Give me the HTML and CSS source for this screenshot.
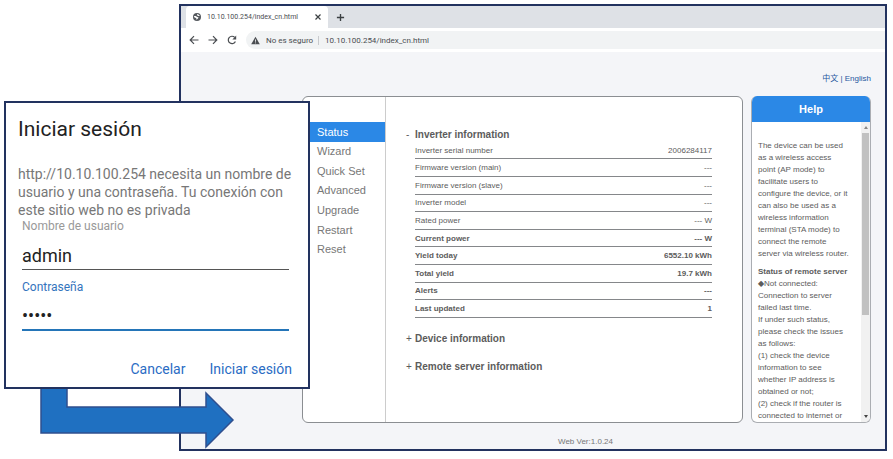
FILE: index.html
```html
<!DOCTYPE html>
<html lang="es">
<head>
  <meta charset="utf-8">
  <title>Iniciar sesión</title>
  <link rel="stylesheet" href="styles.css">
</head>
<body>
  <div class="browser">
    <div class="tabstrip">
      <div class="tab">
        <svg class="globe" viewBox="0 0 16 16">
          <circle cx="8" cy="8" r="8" fill="#55595e"/>
          <path d="M2 6 L6 6 L8 8 L11 8.5 L10 11 L7 13.5 L6.5 10.5 L2.5 8.5 Z M8 2 L12 3.5 L13.5 6 L10.5 6 L8 4.5 Z" fill="#fff"/>
        </svg>
        <span class="tab-title">10.10.100.254/index_cn.html</span>
        <button class="tab-close" aria-label="Cerrar">
          <svg viewBox="0 0 8 8"><path d="M1.5 1.5 L6.5 6.5 M6.5 1.5 L1.5 6.5" stroke="#3c4043" stroke-width="1.2"/></svg>
        </button>
      </div>
      <button class="tab-new" aria-label="Nueva pestaña">
        <svg viewBox="0 0 10 10"><path d="M5 1 V9 M1 5 H9" stroke="#3c4043" stroke-width="1.5"/></svg>
      </button>
    </div>
    <div class="toolbar">
      <button aria-label="Atrás">
        <svg viewBox="0 0 10 10"><path d="M9.5 5 H1.5 M5 1.2 L1.2 5 L5 8.8" fill="none" stroke="#4a4d51" stroke-width="1.2"/></svg>
      </button>
      <button aria-label="Adelante">
        <svg viewBox="0 0 10 10"><path d="M0.5 5 H8.5 M5 1.2 L8.8 5 L5 8.8" fill="none" stroke="#4a4d51" stroke-width="1.2"/></svg>
      </button>
      <button aria-label="Recargar">
        <svg viewBox="0 0 10 10"><path d="M8.4 6.4 A3.7 3.7 0 1 1 7.7 2.4" fill="none" stroke="#4a4d51" stroke-width="1.2"/><path d="M9.2 0.6 V4.4 H5.4 Z" fill="#4a4d51"/></svg>
      </button>
      <div class="address">
        <svg class="warning" viewBox="0 0 10 10"><path d="M5 0.8 L9.8 9.2 H0.2 Z" fill="#4a4d51"/><path d="M5 3.8 V6.4 M5 7.2 V8.2" stroke="#fff" stroke-width="0.9"/></svg>
        <span class="unsafe">No es seguro</span>
        <span class="url">10.10.100.254/index_cn.html</span>
      </div>
    </div>
    <div class="page">
      <div class="lang"><a href="#">中文</a> | <a href="#">English</a></div>
      <div class="columns">
        <div class="panel">
          <ul class="nav">
            <li class="active"><a href="#">Status</a></li>
            <li><a href="#">Wizard</a></li>
            <li><a href="#">Quick Set</a></li>
            <li><a href="#">Advanced</a></li>
            <li><a href="#">Upgrade</a></li>
            <li><a href="#">Restart</a></li>
            <li><a href="#">Reset</a></li>
          </ul>
          <div class="content">
            <h2><span class="sign">-</span>Inverter information</h2>
            <table>
              <tr><th>Inverter serial number</th><td>2006284117</td></tr>
              <tr><th>Firmware version (main)</th><td>---</td></tr>
              <tr><th>Firmware version (slave)</th><td>---</td></tr>
              <tr><th>Inverter model</th><td>---</td></tr>
              <tr><th>Rated power</th><td>--- W</td></tr>
              <tr class="strong"><th>Current power</th><td>--- W</td></tr>
              <tr class="strong"><th>Yield today</th><td>6552.10 kWh</td></tr>
              <tr class="strong"><th>Total yield</th><td>19.7 kWh</td></tr>
              <tr class="strong"><th>Alerts</th><td>---</td></tr>
              <tr class="strong"><th>Last updated</th><td>1</td></tr>
            </table>
            <h2><span class="sign">+</span>Device information</h2>
            <h2><span class="sign">+</span>Remote server information</h2>
          </div>
        </div>
        <div class="help">
          <h3>Help</h3>
          <div class="help-body">
            <div class="help-text">
              <p>The device can be used<br>as a wireless access<br>point (AP mode) to<br>facilitate users to<br>configure the device, or it<br>can also be used as a<br>wireless information<br>terminal (STA mode) to<br>connect the remote<br>server via wireless router.</p>
              <p><b>Status of remote server</b><br>◆Not connected:<br>Connection to server<br>failed last time.<br>If under such status,<br>please check the issues<br>as follows:<br>(1) check the device<br>information to see<br>whether IP address is<br>obtained or not;<br>(2) check if the router is<br>connected to internet or</p>
            </div>
            <div class="scrollbar">
              <span class="arrow-up"></span>
              <span class="thumb"></span>
              <span class="arrow-down"></span>
            </div>
          </div>
        </div>
      </div>
      <div class="version">Web Ver:1.0.24</div>
    </div>
  </div>

  <svg class="flow-arrow" viewBox="0 0 196 66">
    <path d="M1 1 H27 V24 H166 V10 L193 37 L166 64 V50 H1 Z" fill="#1f70c1" stroke="#2f4f8f" stroke-width="1.5"/>
  </svg>

  <form class="dialog">
    <h1>Iniciar sesión</h1>
    <p>http://10.10.100.254 necesita un nombre de usuario y una contraseña. Tu conexión con este sitio web no es privada</p>
    <div class="field">
      <label for="user">Nombre de usuario</label>
      <input type="text" id="user" value="admin">
    </div>
    <div class="field focus">
      <label for="pass">Contraseña</label>
      <input type="password" id="pass" value="admin">
    </div>
    <div class="actions">
      <button type="button">Cancelar</button>
      <button type="button">Iniciar sesión</button>
    </div>
  </form>
</body>
</html>
```

FILE: styles.css
```css
* {
  box-sizing: border-box;
}

body {
  margin: 0;
  padding: 4px 6px 7px 179px;
  background-color: #fff;
  font-family: "Liberation Sans", Arial, sans-serif;
  color: #5c5c5c;
}

button {
  display: flex;
  padding: 0;
  border: none;
  background: none;
  cursor: pointer;
}

a {
  color: inherit;
  text-decoration: none;
}

h1, h2, h3, p, ul {
  margin: 0;
  padding: 0;
}

/* browser window */
.browser {
  border: 2px solid #22325f;
  background-color: #f4f5f8;
}

.tabstrip {
  display: flex;
  align-items: center;
  gap: 8px;
  padding-left: 5px;
  background-color: #dee1e6;
}

.tab {
  display: flex;
  align-items: center;
  width: 142px;
  height: 22px;
  padding: 0 6px 0 7px;
  background-color: #fff;
  border-radius: 4px 4px 0 0;
}

.globe {
  width: 8px;
  height: 8px;
  margin-right: 6px;
}

.tab-title, .address {
  font-family: Roboto, sans-serif;
  font-size: 8px;
  color: #4a4d51;
}

.tab-title {
  flex: 1;
  font-size: 7px;
  white-space: nowrap;
}

.tab-close svg {
  width: 8px;
  height: 8px;
}

.tab-new svg {
  width: 9px;
  height: 9px;
}

.toolbar {
  display: flex;
  align-items: center;
  gap: 9px;
  height: 24px;
  padding-left: 8px;
  background-color: #fff;
}

.toolbar button svg {
  width: 10px;
  height: 10px;
}

.address {
  display: flex;
  align-items: center;
  flex: 1;
  height: 18px;
  padding-left: 5px;
  background-color: #f1f3f4;
  border-radius: 9px 0 0 9px;
}

.warning {
  width: 9px;
  height: 9px;
  margin-right: 6px;
}

.unsafe {
  padding-right: 5px;
  margin-right: 6px;
  border-right: 1px solid #c8cacd;
}

/* inverter page */
.page {
  padding: 21px 14px 1px 121px;
}

.lang {
  font-family: "Liberation Sans", "Noto Sans CJK SC", sans-serif;
  font-size: 8px;
  line-height: 12px;
  color: #1f57a0;
  text-align: right;
}

.columns {
  display: flex;
  gap: 8px;
  margin-top: 11px;
}

.panel {
  display: flex;
  flex: 1;
  background-color: #fff;
  border: 1px solid #8b8e92;
  border-radius: 6px;
}

.nav {
  display: grid;
  grid-auto-rows: 1fr;
  width: 83px;
  height: 325px;
  padding: 25px 0 163px;
  border-right: 1px solid #ccc;
  list-style: none;
  font-size: 11px;
  color: #777;
}

.nav li {
  display: flex;
  align-items: center;
  padding-left: 14px;
}

.nav .active {
  background-color: #2b88e6;
  color: #fff;
}

.content {
  flex: 1;
  padding: 31px 30px 0 29px;
}

h2 {
  margin-bottom: 14px;
  font-size: 10px;
  line-height: 14px;
}

.sign {
  display: inline-block;
  width: 9px;
  margin-left: -9px;
  font-weight: normal;
}

table {
  width: 100%;
  height: 176px;
  margin: -14px 0 14px;
  border-collapse: collapse;
  font-size: 8px;
}

th, td {
  padding: 0;
  border-bottom: 1px solid #85878a;
  font-weight: normal;
  text-align: left;
}

td {
  text-align: right;
}

.strong th, .strong td {
  font-weight: bold;
}

.help {
  display: flex;
  flex-direction: column;
  width: 120px;
  height: 327px;
  background-color: #fff;
  border: 1px solid #aaadb2;
  border-top: none;
  border-radius: 6px;
  overflow: hidden;
}

.help h3 {
  margin: 0 -1px;
  background-color: #2b88e6;
  color: #fff;
  font-size: 11px;
  line-height: 26px;
  text-align: center;
}

.help-body {
  display: flex;
  flex: 1;
  min-height: 0;
}

.help-text {
  flex: 1;
  padding: 18px 0 0 6px;
  font-size: 8px;
  line-height: 12px;
  white-space: nowrap;
}

.help-text p {
  margin-bottom: 6px;
}

.scrollbar {
  display: flex;
  flex-direction: column;
  align-items: center;
  width: 9px;
  padding: 4px 0;
  background-color: #f1f1f1;
}

.arrow-up, .arrow-down {
  border: 2px solid transparent;
}

.arrow-up {
  border-top: none;
  border-bottom: 3px solid #888;
}

.arrow-down {
  margin-top: auto;
  border-bottom: none;
  border-top: 3px solid #444;
}

.thumb {
  width: 7px;
  height: 182px;
  margin-top: 4px;
  background-color: #c1c1c1;
}

.version {
  margin-top: 12px;
  padding-right: 2px;
  font-size: 8px;
  line-height: 13px;
  text-align: center;
  color: #777;
}

/* arrow from the dialog to the page */
.flow-arrow {
  position: absolute;
  left: 40px;
  top: 383px;
  width: 196px;
  height: 66px;
}

/* login dialog */
.dialog {
  position: absolute;
  left: 4px;
  top: 101px;
  width: 306px;
  padding: 13px 12px 9px;
  background-color: #fff;
  border: 2px solid #22325f;
  font-family: Roboto, sans-serif;
}

.dialog h1 {
  font-size: 21px;
  font-weight: normal;
  line-height: 26px;
  color: #222;
}

.dialog p {
  margin-top: 23px;
  font-size: 14px;
  line-height: 18px;
  color: #777;
}

.field {
  display: flex;
  flex-direction: column;
  padding: 0 7px 0 4px;
}

.field label {
  font-size: 12px;
  line-height: 14px;
  color: #999;
}

.field input {
  height: 37px;
  padding: 8px 0 0;
  border: none;
  border-bottom: 1px solid #555;
  outline: none;
  background: none;
  font-family: inherit;
  font-size: 18px;
  color: #222;
}

.field.focus {
  margin-top: 10px;
}

.field.focus label {
  color: #3474bd;
}

.field.focus input {
  border-bottom: 2px solid #2475b8;
}

.actions {
  display: flex;
  justify-content: flex-end;
  gap: 24px;
  margin-top: 29px;
  padding-right: 4px;
}

.actions button {
  font-family: inherit;
  font-size: 14px;
  line-height: 18px;
  color: #2a6cc4;
}
```
